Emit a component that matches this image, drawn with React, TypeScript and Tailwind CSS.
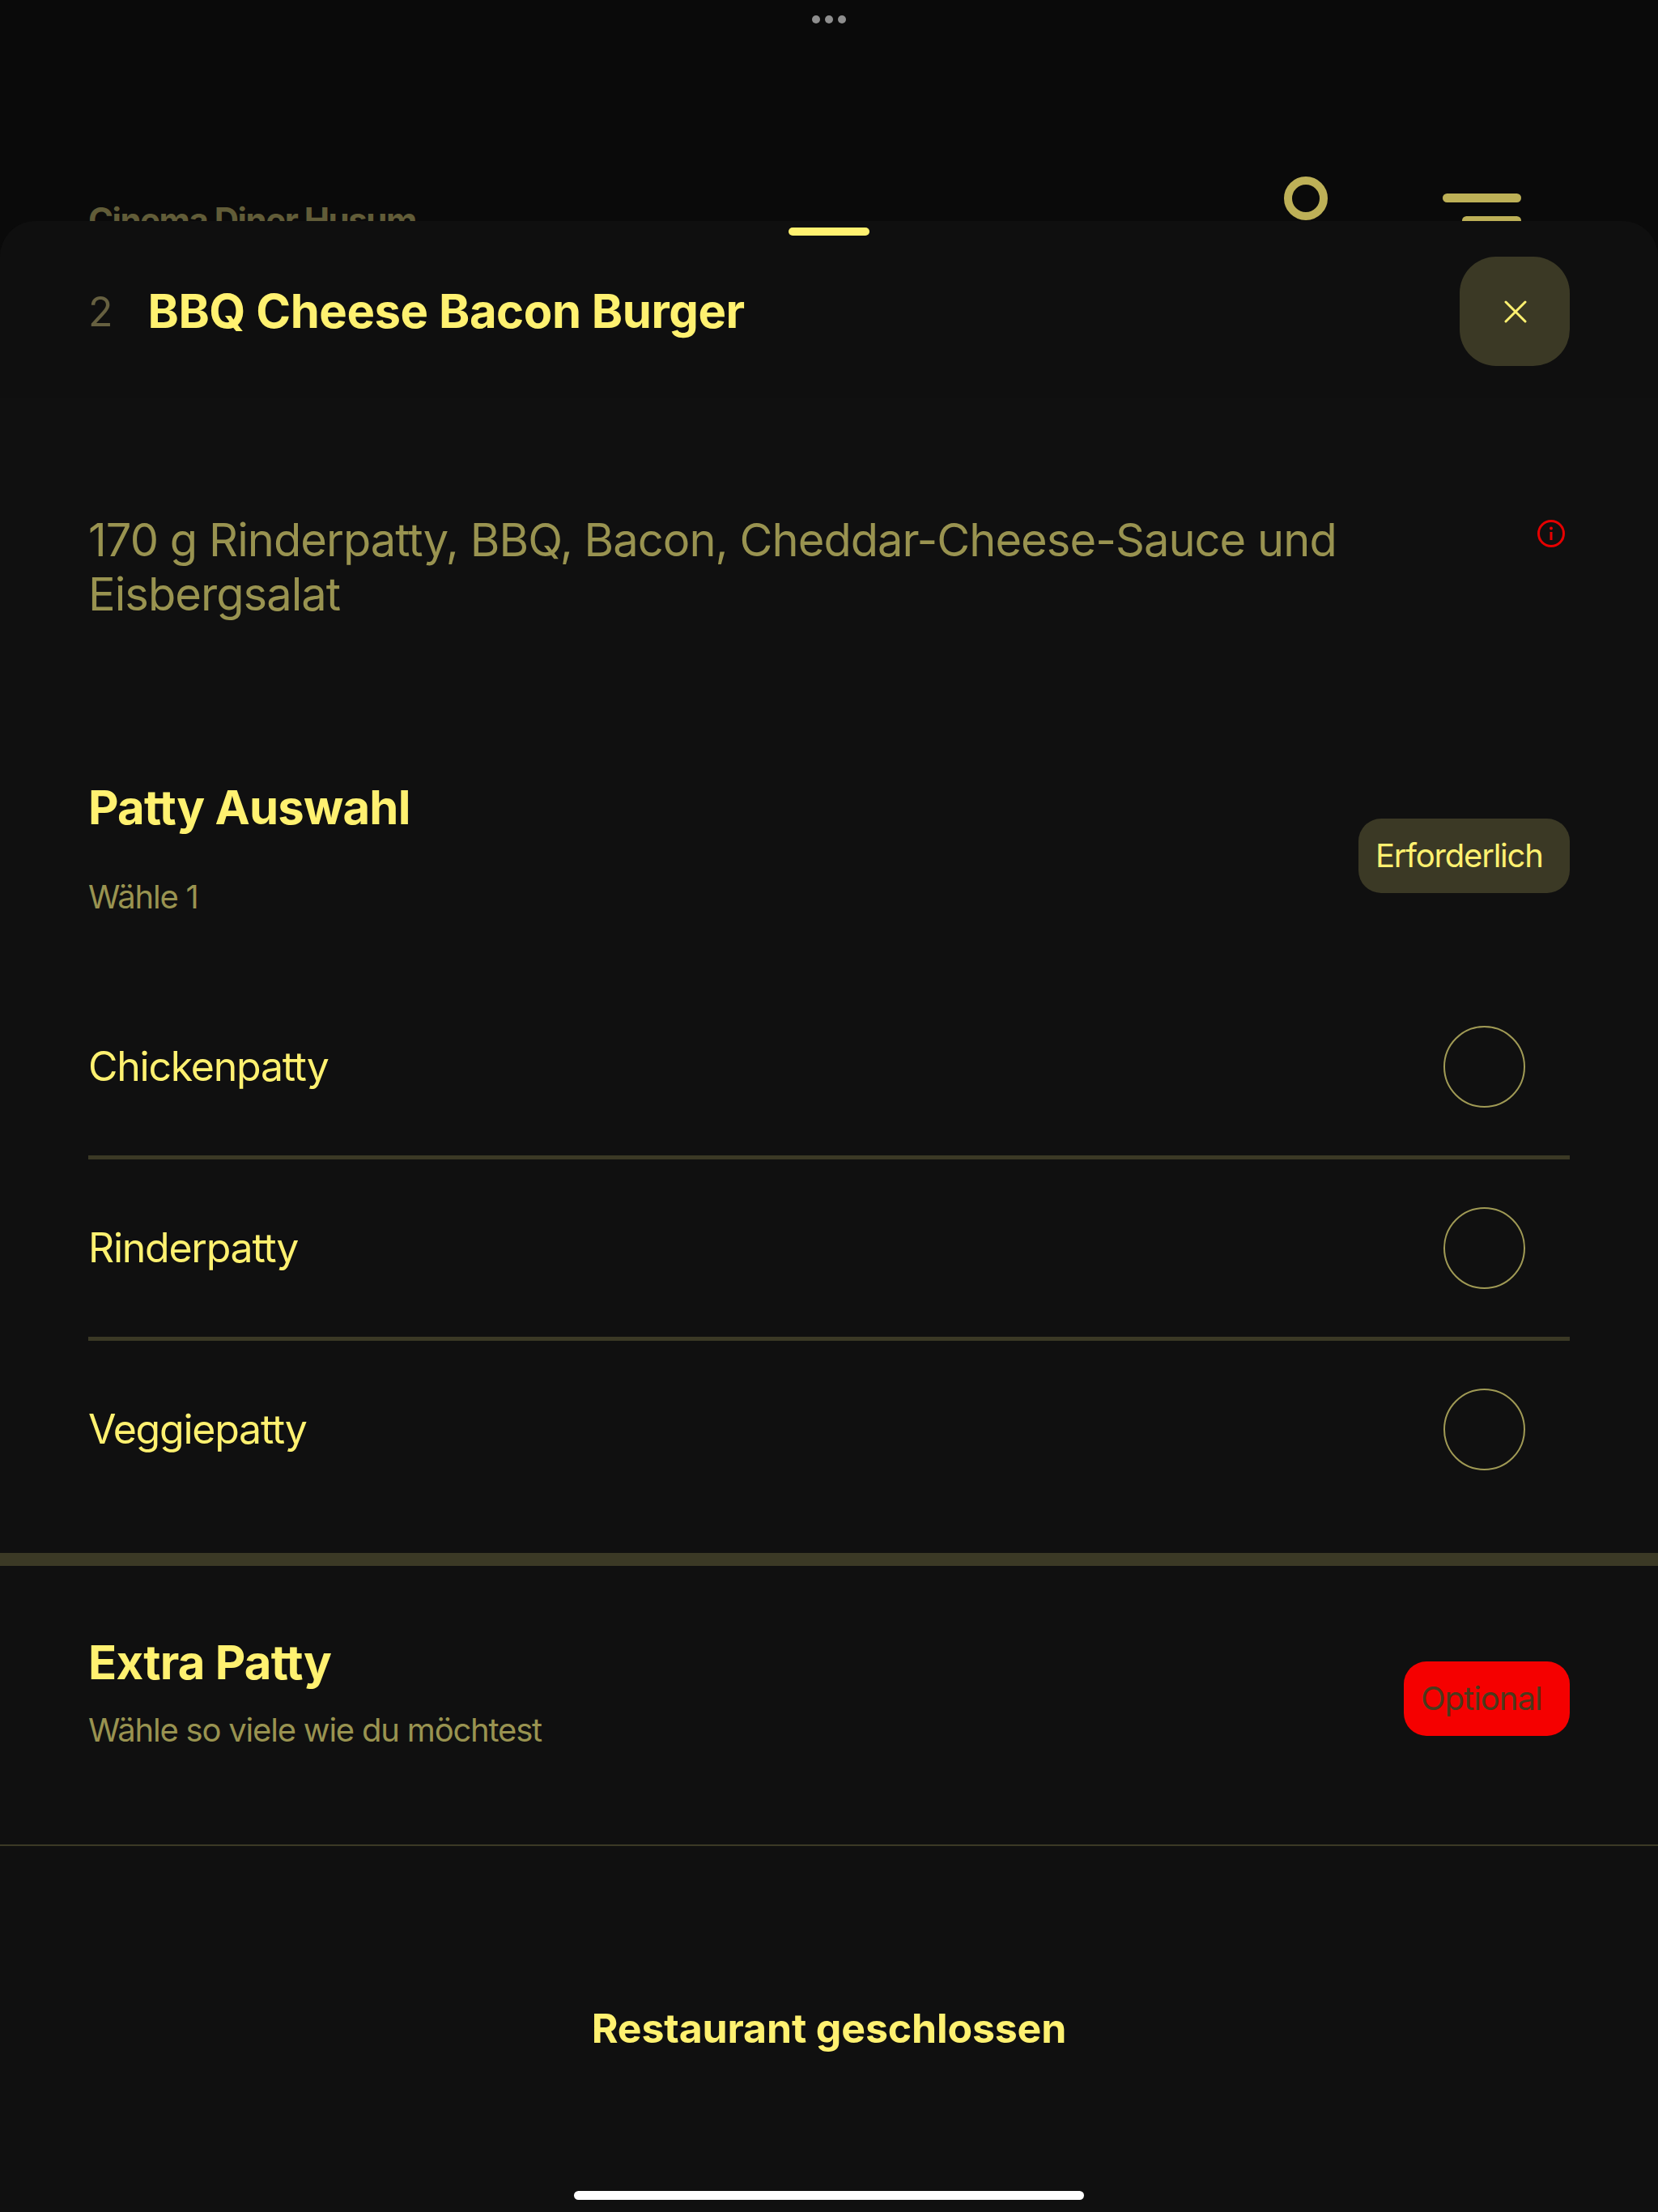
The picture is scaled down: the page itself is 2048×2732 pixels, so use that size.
const OPTIONS = ["Chickenpatty", "Rinderpatty", "Veggiepatty"];

function GroupHeader({
  title,
  hint,
  badge,
  className,
  textClass,
  hintClass,
  badgeClass,
}: {
  title: string;
  hint: string;
  badge: string;
  className: string;
  textClass: string;
  hintClass: string;
  badgeClass: string;
}) {
  return (
    <div className={`flex items-center justify-between px-[109px] ${className}`}>
      <div className={`flex flex-col ${textClass}`}>
        <h2 className="text-[58px] leading-[70px] font-bold tracking-[-0.75px] text-[#fff170]">{title}</h2>
        <p className={`text-[40px] leading-[48px] tracking-[-1.2px] text-[#999350] ${hintClass}`}>{hint}</p>
      </div>
      <span className={`flex h-[92px] items-center rounded-[28px] text-[40px] ${badgeClass}`}>
        {badge}
      </span>
    </div>
  );
}

export default function App() {
  return (
    <div className="relative h-[2732px] w-[2048px] overflow-hidden bg-[#0a0a0a] font-['Inter',sans-serif]">
      <div className="flex justify-center gap-[6px] pt-[19px]">
        <span className="h-[10px] w-[10px] rounded-full bg-[#8e8e8e]" />
        <span className="h-[10px] w-[10px] rounded-full bg-[#8e8e8e]" />
        <span className="h-[10px] w-[10px] rounded-full bg-[#8e8e8e]" />
      </div>

      <div className="flex items-start justify-between pt-[189px] pr-[169px] pl-[109px]">
        <span className="mt-[30px] text-[42px] leading-[48px] font-bold tracking-[-1.5px] text-[#615c38]">Cinema Diner Husum</span>
        <div className="flex items-start gap-[142px]">
          <span className="h-[54px] w-[54px] rounded-full border-[10px] border-[#bdb057]" />
          <div className="mt-[21px] flex flex-col items-end gap-[17px]">
            <span className="h-[11px] w-[97px] rounded-full bg-[#bdb057]" />
            <span className="h-[11px] w-[73px] rounded-full bg-[#bdb057]" />
          </div>
        </div>
      </div>

      {/* sheet */}
      <div className="absolute inset-x-0 top-[273px] bottom-0 flex flex-col rounded-t-[44px] bg-[#101010]">
        <div className="flex h-[220px] flex-col rounded-t-[44px] border-b border-[#111111] bg-[#0f0f0f]">
          <span className="mx-auto mt-[8px] h-[10px] w-[100px] rounded-full bg-[#fff170]" />
          <div className="mt-[26px] flex items-center justify-between px-[109px]">
            <div className="flex items-center gap-[43px]">
              <span className="text-[50px] leading-[60px] text-[#666040]">2</span>
              <h1 className="-translate-y-px text-[58px] leading-[68px] font-bold tracking-[-0.45px] text-[#fff170]">BBQ Cheese Bacon Burger</h1>
            </div>
            <button className="flex h-[135px] w-[136px] items-center justify-center rounded-[45px] bg-[#3b3925] pl-[1px]">
              <svg width="28" height="28" viewBox="0 0 28 28" fill="none" stroke="#fff170" strokeWidth="3" strokeLinecap="round">
                <path d="M2 2 L26 26 M26 2 L2 26" />
              </svg>
            </button>
          </div>
        </div>

        <div className="flex items-start justify-between pt-[141px] pr-[109px] pl-[109px]">
          <p className="w-[1640px] text-[56px] leading-[67px] tracking-[-0.95px] text-[#999350]">
            170 g Rinderpatty, BBQ, Bacon, Cheddar-Cheese-Sauce und Eisbergsalat
          </p>
          <svg className="mt-[8px] mr-[6px]" width="34" height="34" viewBox="0 0 34 34" fill="none">
            <circle cx="17" cy="17" r="15.5" stroke="#e60000" strokeWidth="3" />
            <circle cx="17" cy="10.5" r="2" fill="#e60000" />
            <path d="M17 15v10" stroke="#e60000" strokeWidth="3" />
          </svg>
        </div>

        <GroupHeader
          title="Patty Auswahl"
          hint="Wähle 1"
          badge="Erforderlich"
          className="mt-[194px]"
          textClass=""
          hintClass="mt-[52px]"
          badgeClass="mt-[19px] w-[261px] bg-[#3b3925] pl-[21px] tracking-[-1.2px] text-[#fff170]"
        />

        <div className="mt-[76px] flex flex-col px-[109px]">
          {OPTIONS.map((o, i) => (
            <div
              key={o}
              className={`flex h-[224px] items-center justify-between pr-[55px] ${i < 2 ? "border-b-[5px] border-[#3b3925]" : "pb-[5px]"}`}
            >
              <span className="text-[50px] tracking-[-1.25px] text-[#fff170]">{o}</span>
              <span className="h-[101px] w-[101px] rounded-full border-2 border-[#a09a55]" />
            </div>
          ))}
        </div>

        <div className="mt-[38px] h-[16px] bg-[#3b3925]" />

        <GroupHeader
          title="Extra Patty"
          hint="Wähle so viele wie du möchtest"
          badge="Optional"
          className="h-[346px] border-b-2 border-[#3b3925] pb-[16px]"
          textClass="mb-[17px]"
          hintClass="mt-[25px]"
          badgeClass="w-[205px] bg-[#f50000] pl-[21px] tracking-[-1px] text-[#4a3a1c]"
        />

        <div className="flex flex-1 flex-col items-center">
          <span className="mt-[195px] text-[50px] leading-[60px] font-bold tracking-[-0.15px] text-[#fff170]">Restaurant geschlossen</span>
          <span className="mt-auto mb-[15px] h-[11px] w-[630px] rounded-full bg-white" />
        </div>
      </div>
    </div>
  );
}
